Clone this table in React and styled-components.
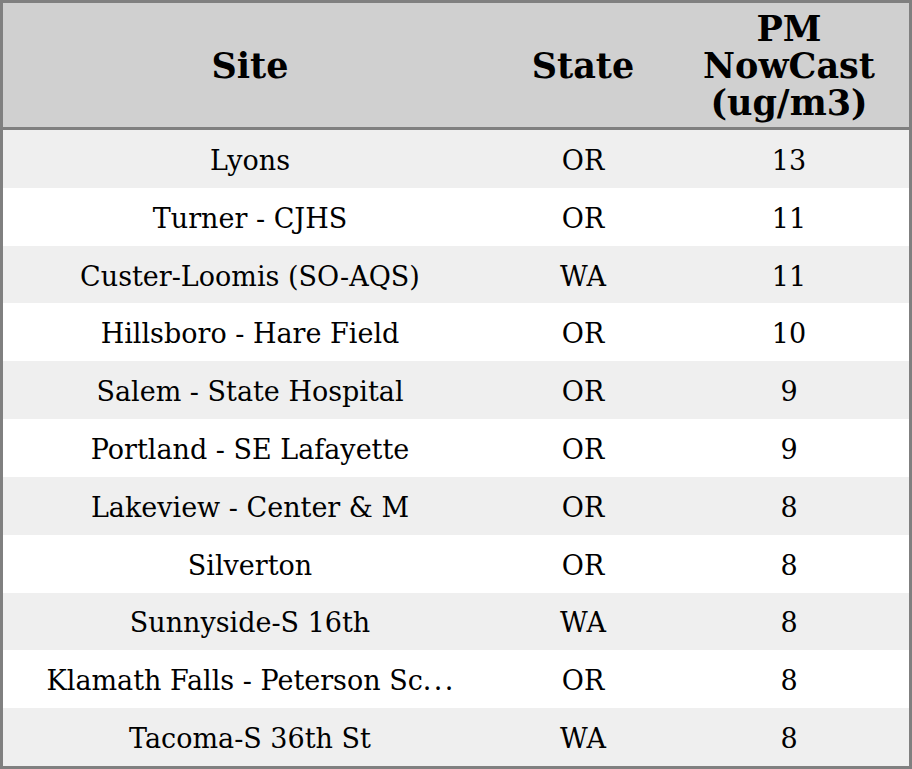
import styled, { createGlobalStyle } from "styled-components";

const GlobalStyle = createGlobalStyle`
  html, body {
    margin: 0;
    padding: 0;
    background: #ffffff;
  }
  body {
    font-family: "DejaVu Serif", "Liberation Serif", serif;
    color: #000000;
  }
`;

const rows = [
  { site: "Lyons", state: "OR", value: 13 },
  { site: "Turner - CJHS", state: "OR", value: 11 },
  { site: "Custer-Loomis (SO-AQS)", state: "WA", value: 11 },
  { site: "Hillsboro - Hare Field", state: "OR", value: 10 },
  { site: "Salem - State Hospital", state: "OR", value: 9 },
  { site: "Portland - SE Lafayette", state: "OR", value: 9 },
  { site: "Lakeview - Center & M", state: "OR", value: 8 },
  { site: "Silverton", state: "OR", value: 8 },
  { site: "Sunnyside-S 16th", state: "WA", value: 8 },
  { site: "Klamath Falls - Peterson Sc", state: "OR", value: 8, cut: true },
  { site: "Tacoma-S 36th St", state: "WA", value: 8 },
];

const Frame = styled.div`
  box-sizing: border-box;
  height: 100vh;
  width: 100%;
  border: 3px solid #808080;
  display: flex;
  flex-direction: column;
`;

const Grid = styled.div`
  display: grid;
  grid-template-columns: 494px 172px 240px;
`;

const HeaderRow = styled(Grid)`
  height: 124px;
  background: #d0d0d0;
  border-bottom: 3px solid #808080;
`;

const HeadCell = styled.div`
  display: flex;
  align-items: center;
  justify-content: center;
  text-align: center;
  font-weight: 700;
  font-size: 35px;
  line-height: 37px;
`;

const Body = styled.div`
  flex: 1;
  display: grid;
  grid-auto-rows: 1fr;
`;

const Row = styled(Grid)`
  background: ${(props) => (props.$odd ? "#ffffff" : "#efefef")};
`;

const Cell = styled.div`
  display: flex;
  align-items: center;
  justify-content: center;
  padding-top: 3px;
  font-size: 27px;
  white-space: nowrap;
  overflow: hidden;
`;

const Dots = styled.span`
  letter-spacing: 2.4px;
  margin-right: -2.4px;
`;

export default function App() {
  return (
    <>
      <GlobalStyle />
      <Frame>
        <HeaderRow>
          <HeadCell>Site</HeadCell>
          <HeadCell>State</HeadCell>
          <HeadCell>
            PM
            <br />
            NowCast
            <br />
            (ug/m3)
          </HeadCell>
        </HeaderRow>
        <Body>
          {rows.map((r, i) => (
            <Row key={r.site} $odd={i % 2 === 1}>
              <Cell>
                {r.site}
                {r.cut && <Dots>...</Dots>}
              </Cell>
              <Cell>{r.state}</Cell>
              <Cell>{r.value}</Cell>
            </Row>
          ))}
        </Body>
      </Frame>
    </>
  );
}
